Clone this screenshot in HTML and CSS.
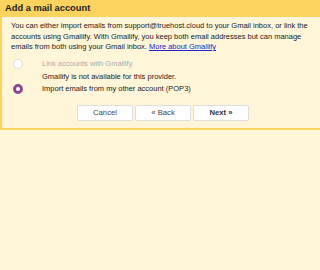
FILE: index.html
```html
<!DOCTYPE html>
<html>
<head>
<meta charset="utf-8">
<link rel="stylesheet" href="styles.css">
</head>
<body>
<div class="dialog">
  <div class="title">Add a mail account</div>
  <div class="content">
    <p class="intro">You can either import emails from support@truehost.cloud to your Gmail inbox, or link the accounts using Gmailify. With Gmailify, you keep both email addresses but can manage emails from both using your Gmail inbox. <a href="#" class="link">More about Gmailify</a></p>
    <div class="option first">
      <span class="radio"></span>
      <span class="label disabled">Link accounts with Gmailify</span>
    </div>
    <div class="note">Gmailify is not available for this provider.</div>
    <div class="option">
      <span class="radio checked"></span>
      <span class="label">Import emails from my other account (POP3)</span>
    </div>
    <div class="buttons">
      <button class="btn">Cancel</button>
      <button class="btn">« Back</button>
      <button class="btn primary">Next »</button>
    </div>
  </div>
</div>
</body>
</html>
```
FILE: styles.css
```css
html, body {
  margin: 0;
  padding: 0;
  background: #fff5d8;
  font-family: "Liberation Sans", Arial, sans-serif;
  color: #222;
}
.dialog {
  width: 330px;
  border-left: 2px solid #fcd35f;
  border-bottom: 2px solid #fcd35f;
}
.title {
  background: #fcd35f;
  height: 17px;
  line-height: 17px;
  padding-left: 3px;
  font-size: 9.3px;
  font-weight: bold;
  color: #222;
}
.content {
  padding: 4px 0 7px 9px;
  width: 302px;
  font-size: 7.5px;
}
.intro {
  margin: 0;
  line-height: 10.5px;
}
.link {
  color: #2222cc;
  text-decoration: underline;
}
.option {
  display: flex;
  align-items: center;
  margin-top: 0;
  height: 12px;
}
.option.first {
  margin-top: 5px;
}
.radio {
  width: 10px;
  height: 10px;
  border-radius: 50%;
  border: 1px solid #ddd;
  background: #fff;
  margin-left: 2px;
  margin-right: 19px;
  box-sizing: border-box;
}
.radio.checked {
  border: 3px solid #8b4a8f;
  background: #fff;
}
.label.disabled {
  color: #aaa;
}
.note {
  margin-left: 31px;
  line-height: 13px;
}
.buttons {
  display: flex;
  justify-content: center;
  gap: 2px;
  margin-top: 10px;
  padding-left: 2px;
}
.btn {
  width: 56px;
  height: 16px;
  background: #fff;
  border: 1px solid #ddd;
  border-radius: 2px;
  font-family: "Liberation Sans", Arial, sans-serif;
  font-size: 7.7px;
  color: #444;
  padding: 0;
}
.btn.primary {
  font-weight: bold;
  color: #333;
}
```
